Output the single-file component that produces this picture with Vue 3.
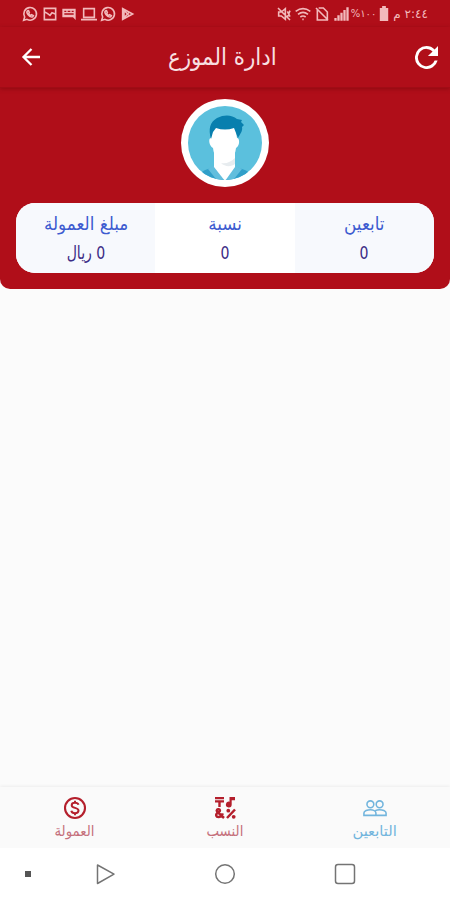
<template>
  <div class="screen" dir="ltr">
    <header class="header">
      <div class="status-bar">
        <div class="notifications">
          <svg v-for="icon in notifications" :key="icon.id" class="status-icon" viewBox="0 0 24 24">
            <path :d="icon.path" :class="icon.kind" />
          </svg>
        </div>
        <div class="system">
          <svg v-for="icon in systemIcons" :key="icon.id" class="status-icon" viewBox="0 0 24 24">
            <path :d="icon.path" :class="icon.kind" />
          </svg>
          <span class="percent">%١٠٠</span>
          <svg class="battery" viewBox="0 0 10 16">
            <path d="M3 0h4v2h2.500v14h-9V2H3z" fill="currentColor" />
          </svg>
          <span class="clock" dir="rtl">٢:٤٤ م</span>
        </div>
      </div>

      <div class="app-bar">
        <svg class="back" viewBox="0 0 20 20">
          <path d="M19 10H3M10.500 2 2.500 10l8 8" />
        </svg>
        <h1 class="title"><span>ادارة الموزع</span></h1>
        <svg class="refresh" viewBox="4 4 16 16">
          <path d="M17.650 6.350A7.960 7.960 0 0 0 12 4a8 8 0 1 0 7.730 10h-2.080A6 6 0 1 1 12 6c1.660 0 3.140.69 4.220 1.780L13 11h7V4z" />
        </svg>
      </div>

      <div class="profile">
        <svg class="avatar" viewBox="0 0 88 88">
          <defs>
            <clipPath id="face"><circle cx="44" cy="44" r="37" /></clipPath>
          </defs>
          <circle cx="44" cy="44" r="44" fill="#fff" />
          <g clip-path="url(#face)">
            <rect width="88" height="88" fill="#5bc0dd" />
            <path d="M17 88c1-12 2-16 10-18l8-3h18l8 3c8 2 10 6 11 18z" fill="#319fc9" />
            <path d="m32 67-5 3 8 10 9 5 9-5 8-10-6-3z" fill="#62bedd" />
            <path d="M33 54h21v14L44 82 33 68z" fill="#fff" />
            <path d="M40 64c5 1 10-1 14-5v6c-4 3-10 3-14-1z" fill="#e7ecef" />
            <path d="M32 26h22l2 13c3 0 3 8-1 10-1 10-7 15-12 15S33 58 32 49c-4-2-5-10-2-10z" fill="#fff" />
            <path d="M30 40c-3-10-1-17 6-21 8-4 15-3 20 1l5 1-1 2 3 3-2 2c1 4-2 7-4 11l-4-10c-6 2-12 2-18 0l-3 4z" fill="#087fae" />
          </g>
        </svg>
      </div>

      <div class="stats">
        <div v-for="stat in stats" :key="stat.label" class="stat">
          <span class="stat-label">{{ stat.label }}</span>
          <span class="stat-value" dir="rtl">{{ stat.value }}</span>
        </div>
      </div>
    </header>

    <main class="content"></main>

    <nav class="tabs">
      <div class="tab">
        <svg class="tab-icon" viewBox="0 0 24 24">
          <circle cx="12" cy="12" r="10" fill="none" stroke="currentColor" stroke-width="2.100" />
          <path d="M15.500 8.800c-.5-1.500-1.800-2-3.500-2-2 0-3.300.9-3.300 2.400 0 3.600 6.800 1.700 6.800 5.400 0 1.600-1.400 2.600-3.500 2.600-2 0-3.300-.8-3.700-2.500M12 4.800v2M12 17.200v2" fill="none" stroke="currentColor" stroke-width="2" />
        </svg>
        <span class="tab-label">العمولة</span>
      </div>
      <div class="tab">
        <svg class="tab-icon" viewBox="0 0 24 24">
          <path d="M2 1h9v2.200H2zM2 4.300h9v2.200H7.700V11H5.300V6.500H2zM16.500 1H22v3.200h-3.300v4.300a2.900 2.900 0 1 1-2.200-2.800z" fill="currentColor" />
          <path d="m11 22-6.800-6.400c-1.200-1.400.2-2.600 1.500-2.300 1.600.4 1.500 1.800.4 2.600l-2 1.300c-1.700 1.300-1 3.800 1.200 3.800 2 0 3.700-1.300 4.500-3.600M14 22l8-8.500" fill="none" stroke="currentColor" stroke-width="2.500" />
          <circle cx="15.300" cy="14.700" r="1.900" fill="currentColor" />
          <circle cx="20.700" cy="20.800" r="1.900" fill="currentColor" />
        </svg>
        <span class="tab-label">النسب</span>
      </div>
      <div class="tab active">
        <svg class="tab-icon people" viewBox="0 0 26 18">
          <g fill="none" stroke="currentColor" stroke-width="1.700">
            <circle cx="8" cy="5" r="3.700" />
            <circle cx="18" cy="5" r="3.700" />
            <path d="M1 17v-2.500c0-2.300 4-3.700 7-3.700s6 1.400 6 3.700V17zM14 17h11v-2.500c0-2.300-4-3.700-7-3.700-1.600 0-3.300.3-4.700 1" />
          </g>
        </svg>
        <span class="tab-label">التابعين</span>
      </div>
    </nav>

    <footer class="system-nav">
      <svg viewBox="0 0 450 52">
        <rect x="25" y="23" width="6" height="6" fill="#555" />
        <g fill="none" stroke="#747474" stroke-width="1.500" stroke-linejoin="round">
          <path d="M97.500 17v18.500L114 26.200z" />
          <circle cx="225" cy="26" r="9.300" />
          <rect x="335.500" y="16.500" width="19" height="19" rx="2.500" />
        </g>
      </svg>
    </footer>
  </div>
</template>

<script setup>
const whatsapp =
  "M2.500 21.500 4 16.500A9.500 9.500 0 1 1 7.500 20zM8 7.500c-1 1-.8 3 1.200 5.500 2.500 3 5.300 4.200 7 3l.8-1.500-2.700-1.500-1.300 1.200c-1.500-.7-2.400-1.700-3-3L11 9.800 9.800 7z";

// Icons on the left side of the status bar
const notifications = [
  { id: "chat", kind: "line", path: whatsapp },
  { id: "image", kind: "line", path: "M3.500 3.500h17v17h-17zM4 9l4 2 4 3 3-4 5 2" },
  { id: "message", kind: "solid", path: "M2 4h20v17l-4-4H2zM5 7v2h3V7zM10 7v2h4V7zM16 7v2h3V7zM5 11v2h14v-2z" },
  { id: "laptop", kind: "line", path: "M4 4h16v13H4zM0 20.500h24" },
  { id: "chat-2", kind: "line", path: whatsapp },
  { id: "play", kind: "line", path: "M4 4v16l15-8zM4 4l10 11M4 20 14 9M6 6v12" },
];

// Icons on the right side of the status bar
const systemIcons = [
  { id: "mute", kind: "line", path: "M4 9v6h4l6 5V4L8 9zM3 3l18 18M17 8l4 8M21 7l-4 10" },
  { id: "wifi", kind: "line", path: "M1 8q11-8 22 0M4.500 12.500q7.500-6 15 0M8 16.500q4-3 8 0M11 20h2" },
  { id: "no-sim", kind: "line", path: "M5 5v16h15V9l-6-6H7M3 3l18 18" },
  { id: "signal", kind: "solid", path: "M2 22v-4h3.500v4zM6.500 22v-8H10v8zM11 22V10h3.500v12zM15.500 22V6H19v16zM20 22V2h3.500v20z" },
];

const stats = [
  { label: "مبلغ العمولة", value: "0 ريال" },
  { label: "نسبة", value: "0" },
  { label: "تابعين", value: "0" },
];
</script>

<style>
body {
  margin: 0;
  background: #fafafa;
}
</style>

<style scoped>
.screen {
  display: flex;
  flex-direction: column;
  width: 450px;
  height: 900px;
  overflow: hidden;
  background: #fbfbfb;
  font-family: "DejaVu Sans", sans-serif;
}

.header {
  height: 289px;
  box-sizing: border-box;
  border-radius: 0 0 10px 10px;
  background: #b00e19;
}

.status-bar {
  display: flex;
  justify-content: space-between;
  height: 27px;
  padding: 0 22px;
  align-items: center;
  color: #f2b9bb;
}

.notifications,
.system {
  display: flex;
  align-items: center;
  gap: 3.600px;
}

.system {
  gap: 3px;
}

.status-icon {
  width: 16px;
  height: 16px;
}

.line {
  fill: none;
  stroke: currentColor;
  stroke-width: 2.4;
}

.solid {
  fill: currentColor;
  fill-rule: evenodd;
}

.percent,
.clock {
  font-size: 12px;
  white-space: nowrap;
}

.percent {
  margin-left: -1px;
  font-size: 10px;
}

.battery {
  width: 10px;
  height: 15px;
  margin: 0 1px 0 0;
}

.app-bar {
  display: flex;
  align-items: center;
  justify-content: space-between;
  height: 61px;
  box-sizing: border-box;
  padding: 0 12px 0 21px;
  border-bottom: 1px solid #a10c15;
  box-shadow: 0 1px 4px rgba(80, 0, 0, 0.35);
}

.back {
  width: 20px;
  height: 20px;
  fill: none;
  stroke: #fff;
  stroke-width: 2.3;
}

.title {
  margin: 0 11px 0 0;
  color: #f8dfe0;
  font-size: 21px;
  font-weight: 400;
  line-height: 30px;
}

.title span {
  display: inline-block;
  transform: scale(1.02, 1.15);
}

.refresh {
  width: 23px;
  height: 23px;
  fill: #fff;
}

.profile {
  display: flex;
  justify-content: center;
  padding-top: 11px;
}

.avatar {
  width: 88px;
  height: 88px;
}

.stats {
  display: grid;
  grid-template-columns: repeat(3, 1fr);
  height: 70px;
  margin: 16px 16px 0;
  overflow: hidden;
  border-radius: 19px;
  background: #fff;
}

.stat {
  display: flex;
  flex-direction: column;
  align-items: center;
  padding-top: 7px;
  background: #f7f9fd;
}

.stat:nth-child(2) {
  background: #fff;
}

.stat-label {
  color: #3d5bd0;
  font-size: 16px;
  line-height: 28px;
  transform: scale(1.05, 1.12);
}

.stat-value {
  color: #3c2c86;
  font-size: 16px;
  line-height: 30px;
  transform: scale(0.88, 1.15);
}

.content {
  flex: 1;
}

.tabs {
  display: grid;
  grid-template-columns: repeat(3, 1fr);
  height: 61px;
  background: #fafafa;
  box-shadow: 0 -1px 3px rgba(0, 0, 0, 0.06);
}

.tab {
  display: flex;
  flex-direction: column;
  align-items: center;
  padding-top: 9px;
  color: #b41f2c;
}

.tab-icon {
  width: 24px;
  height: 24px;
}

.tab-label {
  color: #c5707c;
  font-size: 13px;
  line-height: 24px;
  transform: scale(1.03, 1.12);
}

.active,
.active .tab-label {
  color: #72b5dd;
}

.active .tab-label {
  transform: scale(1.13, 1.12);
}

.system-nav {
  height: 52px;
  background: #fff;
}

.system-nav svg {
  display: block;
  width: 450px;
  height: 52px;
}
</style>
